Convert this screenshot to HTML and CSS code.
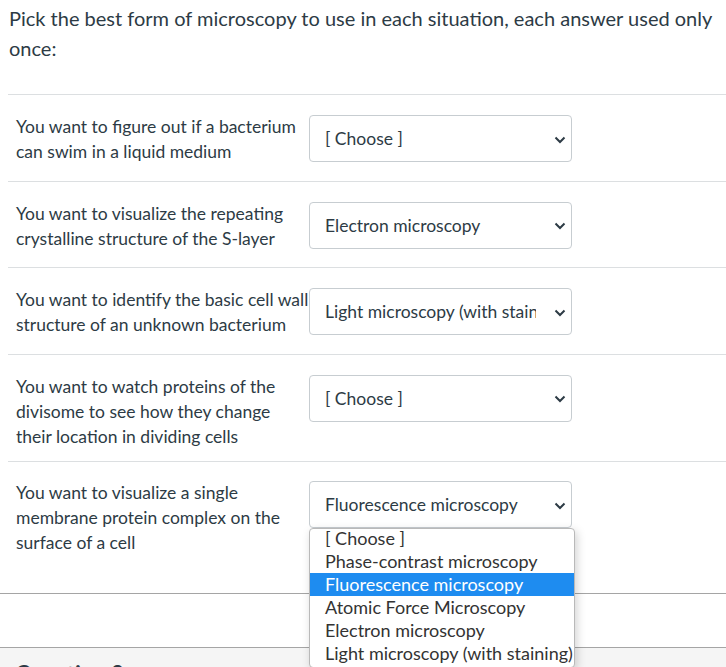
FILE: index.html
```html
<!DOCTYPE html>
<html>
<head>
<meta charset="utf-8">
<link rel="stylesheet" href="styles.css">
</head>
<body>
<div class="question">
  <div class="qtext">Pick the best form of microscopy to use in each situation, each answer used only once:</div>
  <div class="answers">
    <div class="row">
      <div class="prompt">You want to figure out if a bacterium can swim in a liquid medium</div>
      <div class="select"><span class="val">[ Choose ]</span><svg class="chev" viewBox="0 0 12 8" width="12" height="8"><path d="M1.5 1.5 L6 6 L10.5 1.5" fill="none" stroke="#2d3b45" stroke-width="2"/></svg></div>
    </div>
    <div class="row">
      <div class="prompt">You want to visualize the repeating crystalline structure of the S-layer</div>
      <div class="select"><span class="val">Electron microscopy</span><svg class="chev" viewBox="0 0 12 8" width="12" height="8"><path d="M1.5 1.5 L6 6 L10.5 1.5" fill="none" stroke="#2d3b45" stroke-width="2"/></svg></div>
    </div>
    <div class="row">
      <div class="prompt">You want to identify the basic cell wall structure of an unknown bacterium</div>
      <div class="select"><span class="val">Light microscopy (with staining)</span><svg class="chev" viewBox="0 0 12 8" width="12" height="8"><path d="M1.5 1.5 L6 6 L10.5 1.5" fill="none" stroke="#2d3b45" stroke-width="2"/></svg></div>
    </div>
    <div class="row">
      <div class="prompt">You want to watch proteins of the divisome to see how they change their location in dividing cells</div>
      <div class="select"><span class="val">[ Choose ]</span><svg class="chev" viewBox="0 0 12 8" width="12" height="8"><path d="M1.5 1.5 L6 6 L10.5 1.5" fill="none" stroke="#2d3b45" stroke-width="2"/></svg></div>
    </div>
    <div class="row last">
      <div class="prompt">You want to visualize a single membrane protein complex on the surface of a cell</div>
      <div class="select open"><span class="val">Fluorescence microscopy</span><svg class="chev" viewBox="0 0 12 8" width="12" height="8"><path d="M1.5 1.5 L6 6 L10.5 1.5" fill="none" stroke="#2d3b45" stroke-width="2"/></svg>
        <div class="listbox">
          <div class="opts">
            <div class="opt">[ Choose ]</div>
            <div class="opt">Phase-contrast microscopy</div>
            <div class="opt sel">Fluorescence microscopy</div>
            <div class="opt">Atomic Force Microscopy</div>
            <div class="opt">Electron microscopy</div>
            <div class="opt">Light microscopy (with staining)</div>
          </div>
        </div>
      </div>
    </div>
  </div>
  <div class="footer"></div>
</div>
<div class="next">
  <div class="next-title">Question 2</div>
</div>
</body>
</html>
```
FILE: styles.css
```css
html, body {
  margin: 0;
  padding: 0;
  background: #fff;
}
body {
  font-family: Lato, "Open Sans", sans-serif;
  color: #2d3b45;
  width: 726px;
  overflow: hidden;
  height: 667px;
}
.qtext {
  font-size: 20px;
  line-height: 30px;
  padding: 3px 6px 0 9px;
  margin-bottom: 31px;
}
.answers {
  margin-left: 8px;
}
.row {
  display: flex;
  align-items: flex-start;
  border-top: 1px solid #dcdfe1;
  padding: 20px 0 18.5px 8px;
}
.row.last {
  padding-top: 19px;
  padding-bottom: 44px;
}
.prompt {
  width: 293px;
  flex: none;
  font-size: 17.5px;
  line-height: 25px;
  margin-top: -1px;
  margin-bottom: -6px;
}
.select {
  position: relative;
  box-sizing: border-box;
  width: 263px;
  height: 47px;
  border: 1px solid #c7cdd1;
  border-radius: 4px;
  display: flex;
  align-items: center;
  padding: 0 4px 0 15px;
  font-size: 17.5px;
  background: #fff;
}
.val {
  flex: 1;
  overflow: hidden;
  white-space: nowrap;
  margin-right: 18px;
}
.chev {
  flex: none;
  margin-right: 1px;
  margin-top: 2px;
}
.footer {
  border-top: 1px solid #a5a5a5;
  height: 53px;
}
.next {
  border-top: 1px solid #a5a5a5;
  background: #f5f5f5;
  height: 40px;
  padding-left: 15px;
}
.next-title {
  font-size: 22px;
  font-weight: bold;
  line-height: 28px;
  padding-top: 12px;
}
.listbox {
  position: absolute;
  top: 46px;
  left: -1px;
  width: 266px;
  height: 140px;
  box-sizing: border-box;
  border: 1px solid #b9b9b9;
  border-radius: 4px;
  background: #fff;
  overflow: hidden;
  box-shadow: 2px 3px 10px rgba(0, 0, 0, 0.18);
  z-index: 5;
}
.opts {
  margin-top: -2px;
}
.opt {
  height: 23px;
  line-height: 23px;
  font-size: 18px;
  color: #333;
  padding-left: 15px;
  white-space: nowrap;
}
.opt.sel {
  background: #1e8cf0;
  color: #fff;
}
```
